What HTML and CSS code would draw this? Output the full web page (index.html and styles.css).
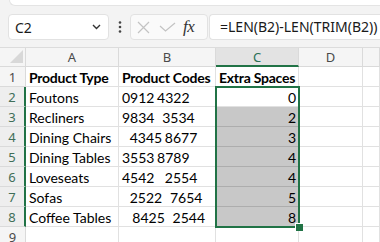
FILE: index.html
```html
<!DOCTYPE html>
<html>
<head>
<meta charset="utf-8">
<link rel="stylesheet" href="styles.css">
</head>
<body>
<div class="app">
  <div class="ribbon"></div>
  <div class="fbar">
    <div class="namebox">
      <span class="ref">C2</span>
      <svg class="chev" width="9" height="6" viewBox="0 0 9 6"><path d="M1 1 L4.5 4.5 L8 1" fill="none" stroke="#333" stroke-width="1.4"/></svg>
    </div>
    <div class="dots">
      <svg width="4" height="12" viewBox="0 0 4 12"><circle cx="2" cy="1.5" r="1.3" fill="#444"/><circle cx="2" cy="6" r="1.3" fill="#444"/><circle cx="2" cy="10.5" r="1.3" fill="#444"/></svg>
    </div>
    <div class="fbtns">
      <svg class="ico-x" width="13" height="13" viewBox="0 0 13 13"><path d="M1 1 L12 12 M12 1 L1 12" stroke="#c3c3c3" stroke-width="1.2" fill="none"/></svg>
      <svg class="ico-ok" width="17" height="10" viewBox="0 0 17 10"><path d="M1 4 L6.5 9 L16 1" stroke="#c3c3c3" stroke-width="1.2" fill="none"/></svg>
      <span class="fx">fx</span>
    </div>
    <div class="finput">=LEN(B2)-LEN(TRIM(B2))</div>
  </div>
  <div class="sheet">
    <div class="grid">
      <div class="corner"><span class="tri"></span></div>
      <div class="ch">A</div>
      <div class="ch">B</div>
      <div class="ch chsel">C</div>
      <div class="ch">D</div>
      <div class="ch"></div>

      <div class="rh">1</div>
      <div class="c b">Product Type</div>
      <div class="c b">Product Codes</div>
      <div class="c b">Extra Spaces</div>
      <div class="c"></div>
      <div class="c"></div>

      <div class="rh rsel">2</div>
      <div class="c">Foutons</div>
      <div class="c code">0912 4322</div>
      <div class="c n">0</div>
      <div class="c"></div>
      <div class="c"></div>

      <div class="rh rsel">3</div>
      <div class="c">Recliners</div>
      <div class="c code">9834   3534</div>
      <div class="c n g">2</div>
      <div class="c"></div>
      <div class="c"></div>

      <div class="rh rsel">4</div>
      <div class="c">Dining Chairs</div>
      <div class="c code">   4345 8677</div>
      <div class="c n g">3</div>
      <div class="c"></div>
      <div class="c"></div>

      <div class="rh rsel">5</div>
      <div class="c">Dining Tables</div>
      <div class="c code">3553 8789    </div>
      <div class="c n g">4</div>
      <div class="c"></div>
      <div class="c"></div>

      <div class="rh rsel">6</div>
      <div class="c">Loveseats</div>
      <div class="c code">4542    2554</div>
      <div class="c n g">4</div>
      <div class="c"></div>
      <div class="c"></div>

      <div class="rh rsel">7</div>
      <div class="c">Sofas</div>
      <div class="c code">   2522   7654</div>
      <div class="c n g">5</div>
      <div class="c"></div>
      <div class="c"></div>

      <div class="rh rsel">8</div>
      <div class="c">Coffee Tables</div>
      <div class="c code">    8425   2544</div>
      <div class="c n g last">8</div>
      <div class="c"></div>
      <div class="c"></div>

      <div class="rh">9</div>
      <div class="c"></div>
      <div class="c"></div>
      <div class="c"></div>
      <div class="c"></div>
      <div class="c"></div>
    </div>
    <div class="sel"><div class="handle"></div></div>
  </div>
</div>
</body>
</html>
```

FILE: styles.css
```css
* { box-sizing: border-box; }
html, body { margin: 0; padding: 0; }
body {
  width: 380px;
  height: 242px;
  overflow: hidden;
  background: #f3f3f3;
  font-family: "Noto Sans", "Open Sans", sans-serif;
}
.app { width: 380px; height: 242px; overflow: hidden; }

.ribbon {
  height: 6px;
  margin-left: 9px;
  background: #ffffff;
  border-left: 1px solid #e4e4e4;
  border-bottom: 1px solid #e4e4e4;
  border-bottom-left-radius: 6px;
}

.fbar {
  display: flex;
  align-items: stretch;
  height: 26px;
  margin-top: 8px;
  padding-left: 8px;
}
.namebox {
  width: 101px;
  background: #fff;
  border: 1px solid #e2e2e2;
  border-radius: 4px;
  display: flex;
  align-items: center;
  justify-content: space-between;
  padding: 0 7px 0 6px;
}
.ref { font-size: 14px; color: #1a1a1a; }
.dots {
  width: 21px;
  display: flex;
  align-items: center;
  justify-content: center;
}
.fbtns {
  width: 78px;
  background: #fafafa;
  border: 1px solid #e2e2e2;
  border-radius: 4px;
  display: flex;
  align-items: center;
  padding-left: 6px;
  gap: 9px;
}
.fx {
  font-family: "Liberation Serif", serif;
  font-style: italic;
  font-size: 17px;
  color: #333;
  margin-left: -2px;
  letter-spacing: -0.5px;
}
.finput {
  flex: 1;
  margin-left: 1px;
  background: #fff;
  border: 1px solid #e2e2e2;
  border-right: none;
  border-radius: 4px 0 0 4px;
  padding-left: 10px;
  font-size: 14px;
  line-height: 24px;
  color: #1a1a1a;
  white-space: nowrap;
  overflow: hidden;
}

.sheet {
  position: relative;
  margin-top: 7px;
}
.grid {
  display: grid;
  grid-template-columns: 26px 93px 97px 83px 64px 1fr;
  grid-template-rows: 19px repeat(9, 20px);
  border-top: 1px solid #dcdcdc;
  background: #fff;
}
.corner, .ch, .rh {
  background: #f5f5f5;
  border-right: 1px solid #dadada;
  border-bottom: 1px solid #dadada;
  color: #4a4a4a;
}
.corner { position: relative; }
.tri {
  position: absolute;
  right: 2px;
  bottom: 3px;
  width: 0;
  height: 0;
  border-left: 13px solid transparent;
  border-bottom: 13px solid #d8d8d8;
}
.ch {
  font-size: 13px;
  display: flex;
  align-items: center;
  justify-content: center;
}
.chsel {
  background: #e3e3e3;
  border-bottom: 2px solid #217346;
  color: #2a6f55;
}
.rh {
  font-size: 13px;
  display: flex;
  align-items: center;
  justify-content: center;
}
.rsel {
  border-right: 2px solid #217346;
  color: #3f6f58;
  background: #eeeeee;
}
.c {
  border-right: 1px solid #e1e1e1;
  border-bottom: 1px solid #e1e1e1;
  font-family: "Lato", "Liberation Sans", sans-serif;
  font-size: 14px;
  color: #000;
  white-space: pre;
  overflow: visible;
  padding: 1px 2px 0 3px;
  line-height: 19px;
}
.code { word-spacing: -1px; }
.b { font-weight: bold; letter-spacing: -0.25px; }
.n { text-align: right; }
.g {
  background: #c8c8c8;
  border-bottom-color: #adadad;
  border-right-color: #c8c8c8;
}

.sel {
  position: absolute;
  left: 215px;
  top: 39px;
  width: 85px;
  height: 142px;
  border: 2px solid #217346;
  pointer-events: none;
}
.handle {
  position: absolute;
  right: -5px;
  bottom: -5px;
  width: 8px;
  height: 8px;
  background: #217346;
  border: 1px solid #fff;
  border-bottom: none;
  border-right: none;
}
```
